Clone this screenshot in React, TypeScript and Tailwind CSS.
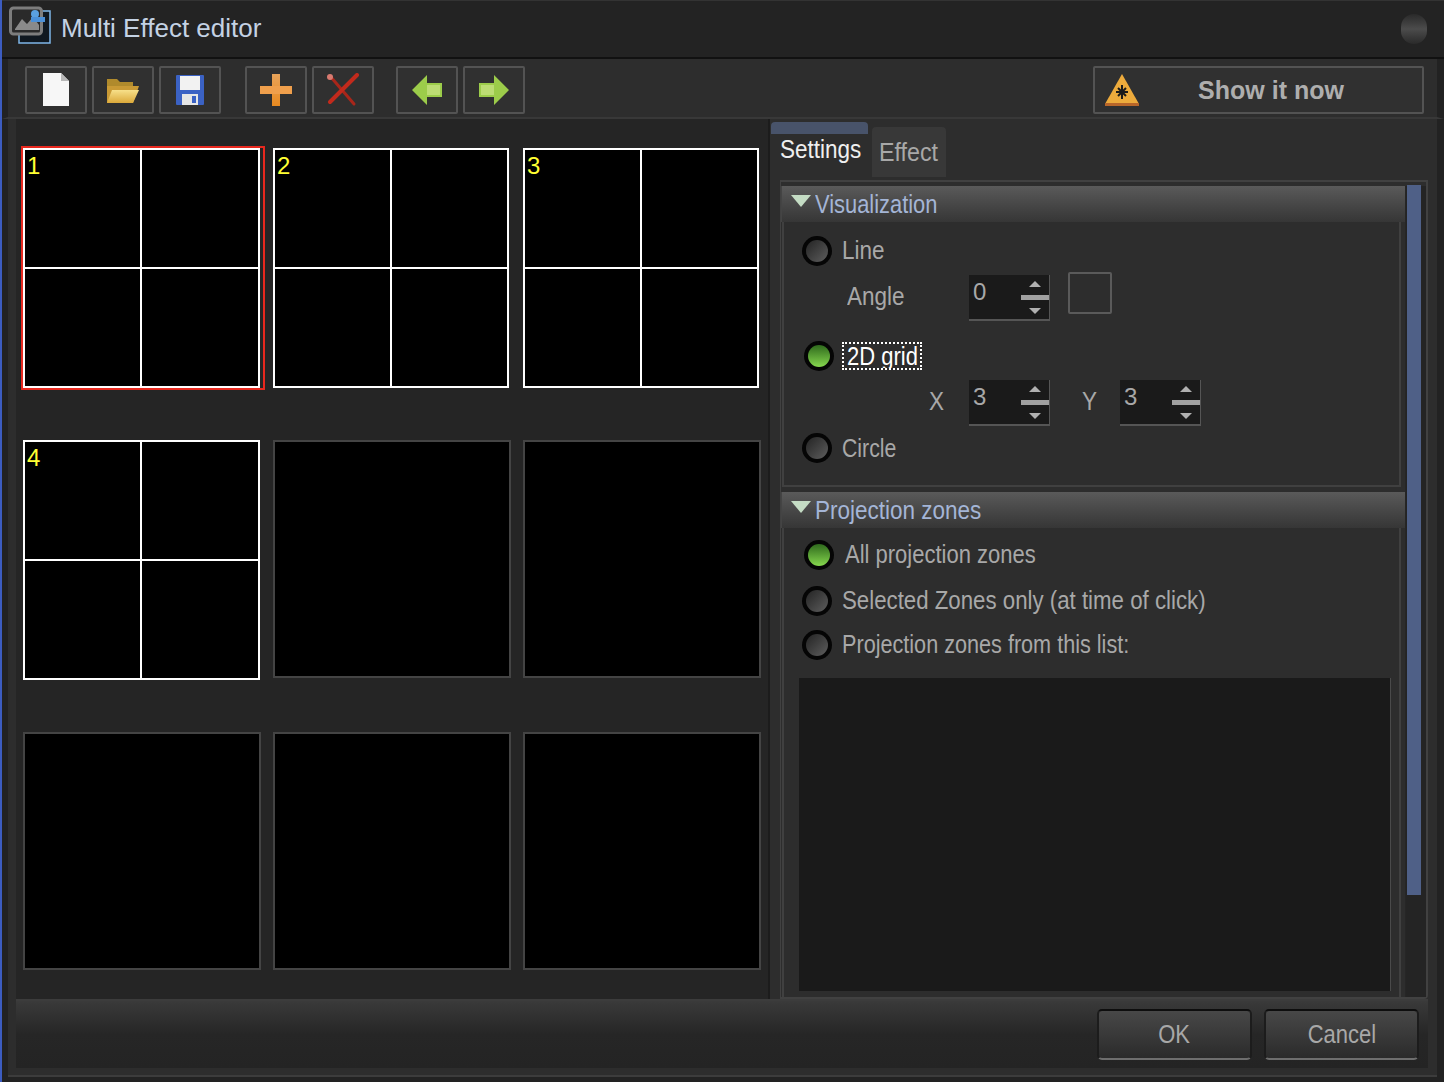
import React from "react";

const FONT = "font-['Liberation_Sans',Arial,sans-serif]";

function ToolBtn({ children, className = "" }: { children: React.ReactNode; className?: string }) {
  return (
    <div className={`w-[62px] h-[48px] flex items-center justify-center bg-[#303030] border-2 border-[#535353] rounded-[2px] ${className}`}>
      {children}
    </div>
  );
}

function Radio({ on = false, className = "" }: { on?: boolean; className?: string }) {
  return (
    <div className={`w-[30px] h-[30px] shrink-0 rounded-full bg-[#050505] p-[4px] ${className}`}>
      <div className={`w-full h-full rounded-full ${on ? "bg-gradient-to-b from-[#2f6a1d] to-[#86d84e]" : "bg-gradient-to-br from-[#242424] to-[#5e5e5e]"}`} />
    </div>
  );
}

function Spin({ value }: { value: string }) {
  return (
    <div className="w-[81px] h-[46px] bg-[#1a1a1a] border-r border-b-2 border-[#555] flex justify-between shrink-0">
      <span className="pl-[4px] text-[24px] leading-[34px] text-[#a8a8a8]">{value}</span>
      <div className="w-[28px] flex flex-col items-center pt-[6px]">
        <div className="w-0 h-0 border-x-[6px] border-x-transparent border-b-[6px] border-b-[#b0b0b0]" />
        <div className="w-[28px] h-[5px] mt-[8px] bg-[#a0a0a0]" />
        <div className="w-0 h-0 mt-[8px] border-x-[6px] border-x-transparent border-t-[6px] border-t-[#b0b0b0]" />
      </div>
    </div>
  );
}

function SectionHeader({ title, scale }: { title: string; scale: string }) {
  return (
    <div className="h-[36px] flex bg-gradient-to-b from-[#5a5a5a] to-[#363636] pl-[9px] border-l border-[#444]">
      <div className="w-0 h-0 mt-[9px] border-x-[10px] border-x-transparent border-t-[12px] border-t-[#c4dcc4]" />
      <span className={`ml-[4px] text-[25px] leading-[36px] text-[#a4b5d6] origin-left ${scale}`}>{title}</span>
    </div>
  );
}

function Cell({ n }: { n?: number }) {
  if (!n) return <div className="h-[238px] bg-black border-2 border-[#444]" />;
  return (
    <div className={`relative h-[240px] ${n === 1 || n === 4 ? "w-[237px]" : "w-[236px]"}`}>
      <div className="w-full h-full bg-white border-2 border-white grid grid-cols-[115px_1fr] grid-rows-2 gap-[2px]">
        <div className="bg-black" />
        <div className="bg-black" />
        <div className="bg-black" />
        <div className="bg-black" />
      </div>
      {n === 1 && <div className="absolute -left-[2px] -top-[2px] w-[244px] h-[244px] border-2 border-[#e8281e]" />}
      <span className="absolute left-[4px] top-[4px] text-[24px] leading-[28px] text-[#ffff33]">{n}</span>
    </div>
  );
}

const label = "text-[25px] leading-[30px] text-[#a8a8a8] origin-left whitespace-nowrap";

export default function App() {
  return (
    <div className={`${FONT} w-[1444px] h-[1082px] flex bg-[#2d2d2d] overflow-hidden`}>
      <div className="w-[2px] bg-[#3c5cc0]" />
      <div className="flex-1 flex flex-col min-w-0">
        {/* title */}
        <div className="h-[59px] shrink-0 flex items-center bg-[#232323] border-t border-[#333] border-b-2 border-b-[#111] pl-[7px] pr-[17px]">
          <svg width="44" height="44" viewBox="0 0 44 44" className="shrink-0 -mt-[4px]">
            <rect x="10" y="6" width="31" height="32" fill="#101820" stroke="#7fb6e8" strokeWidth="1.5" />
            <rect x="1.5" y="3" width="31" height="26" rx="3" fill="#2a2a2a" stroke="#7d7d7d" strokeWidth="3" />
            <path d="M6 24 L13 14 L18 19 L24 12 L30 20 L30 25 L6 25 Z" fill="#8a8a8a" />
            <circle cx="26" cy="9" r="4" fill="#5aa0e0" />
            <rect x="22" y="12" width="14" height="5" fill="#4b90d8" />
          </svg>
          <span className="ml-[8px] -mt-[2px] text-[26px] leading-[30px] text-[#c4d2e4] whitespace-nowrap">Multi Effect editor</span>
          <div className="ml-auto w-[26px] h-[30px] rounded-full bg-gradient-to-b from-[#2a2a2a] via-[#4c4c4c] to-[#2a2a2a]" />
        </div>
        {/* toolbar */}
        <div className="h-[60px] shrink-0 flex items-center bg-[#2d2d2d] border-l-[6px] border-r-[7px] border-x-[#222] border-b-2 border-b-[#383838] pl-[17px] pr-[13px]">
          <div className="flex gap-[5px] mt-[4px]">
            <ToolBtn>
              <svg width="30" height="36" viewBox="0 0 30 36">
                <path d="M2 1 H20 L28 9 V34 H2 Z" fill="#f7f7f7" />
                <path d="M20 1 V9 H28 Z" fill="#b8b8b8" />
              </svg>
            </ToolBtn>
            <ToolBtn>
              <svg width="34" height="28" viewBox="0 0 34 28">
                <defs>
                  <linearGradient id="fo" x1="0" y1="0" x2="0" y2="1">
                    <stop offset="0" stopColor="#f7e08a" />
                    <stop offset="1" stopColor="#dba93a" />
                  </linearGradient>
                </defs>
                <path d="M1 3 H11 L14 6 H27 V12 H1 Z" fill="#b08a2c" />
                <path d="M1 27 V10 H33 L27 27 Z" fill="#c99a35" />
                <path d="M1 27 L6 14 H33 L27 27 Z" fill="url(#fo)" />
              </svg>
            </ToolBtn>
            <ToolBtn>
              <svg width="30" height="32" viewBox="0 0 30 32">
                <rect x="1" y="1" width="28" height="30" rx="1" fill="#3b62c4" />
                <rect x="5" y="2" width="20" height="14" fill="#f2f2f2" />
                <rect x="7" y="20" width="16" height="11" fill="#e6e6e6" />
                <rect x="17" y="22" width="4" height="7" fill="#3b62c4" />
              </svg>
            </ToolBtn>
          </div>
          <div className="flex gap-[5px] ml-[24px] mt-[4px]">
            <ToolBtn>
              <svg width="34" height="34" viewBox="0 0 34 34">
                <defs>
                  <linearGradient id="pl" x1="0" y1="0" x2="0" y2="1">
                    <stop offset="0" stopColor="#e8a35a" />
                    <stop offset="1" stopColor="#e88a20" />
                  </linearGradient>
                </defs>
                <rect x="13" y="1" width="8" height="32" fill="url(#pl)" />
                <rect x="1" y="13" width="32" height="8" fill="#ef9f4c" />
              </svg>
            </ToolBtn>
            <ToolBtn>
              <svg width="34" height="34" viewBox="0 0 34 34">
                <path d="M4 3 L28 31" stroke="#a8261a" strokeWidth="3" strokeLinecap="round" />
                <path d="M31 2 L4 29" stroke="#c22a1c" strokeWidth="4" strokeLinecap="round" />
                <circle cx="4" cy="4" r="3" fill="#d87a70" />
              </svg>
            </ToolBtn>
          </div>
          <div className="flex gap-[5px] ml-[22px] mt-[4px]">
            <ToolBtn>
              <svg width="32" height="32" viewBox="0 0 32 32">
                <path d="M1 16 L16 1 V9 H31 V23 H16 V31 Z" fill="#9ccc4a" />
                <path d="M16 11 H29 V21 H16 Z" fill="#bcdc74" />
              </svg>
            </ToolBtn>
            <ToolBtn>
              <svg width="32" height="32" viewBox="0 0 32 32">
                <path d="M31 16 L16 1 V9 H1 V23 H16 V31 Z" fill="#9ccc4a" />
                <path d="M16 11 H3 V21 H16 Z" fill="#bcdc74" />
              </svg>
            </ToolBtn>
          </div>
          <div className="ml-auto w-[331px] h-[48px] mt-[4px] flex items-center bg-[#303030] border-2 border-[#535353] rounded-[2px] pl-[9px]">
            <svg width="36" height="34" viewBox="0 0 36 34" className="shrink-0">
              <path d="M18 1 L35 31 H1 Z" fill="#edab3c" />
              <rect x="1" y="30" width="34" height="3" fill="#b8662a" />
              <path d="M18 12 V26 M12 19 H24 M14 15 L22 23 M22 15 L14 23" stroke="#1a1a1a" strokeWidth="2" />
            </svg>
            <span className="flex-1 text-center pr-[20px] text-[25px] font-bold leading-[30px] text-[#aeaeae]">Show it now</span>
          </div>
        </div>
        {/* middle */}
        <div className="flex-1 min-h-0 flex border-l-[6px] border-r-[7px] border-[#222]">
          <div className="w-[8px] shrink-0 bg-[#2d2d2d]" />
          <div className="w-[752px] shrink-0 bg-[#252525] pl-[7px] pt-[29px]">
            <div className="grid grid-cols-[238px_238px_238px] gap-x-[12px] gap-y-[52px]">
              <Cell n={1} />
              <Cell n={2} />
              <Cell n={3} />
              <Cell n={4} />
              <Cell />
              <Cell />
              <Cell />
              <Cell />
              <Cell />
            </div>
          </div>
          <div className="w-[2px] shrink-0 bg-[#1c1c1c]" />
          <div className="flex-1 min-w-0 flex flex-col pr-[9px] pt-[3px]">
            {/* tabs */}
            <div className="h-[58px] shrink-0 flex items-start pl-[1px]">
              <div className="w-[97px] h-[60px] rounded-t-[4px] border-t-[12px] border-[#48536a] bg-[#2d2d2d] pl-[9px]">
                <span className="block text-[25px] leading-[30px] text-[#efefef] scale-x-[0.9] origin-left">Settings</span>
              </div>
              <div className="w-[74px] h-[50px] mt-[5px] ml-[4px] rounded-t-[4px] bg-[#383838] pl-[7px] pt-[9px]">
                <span className="block text-[25px] leading-[32px] text-[#a8a8a8] scale-x-[0.93] origin-left">Effect</span>
              </div>
            </div>
            {/* content */}
            <div className="flex-1 min-h-0 ml-[10px] flex border-t-2 border-r-2 border-b-2 border-l border-[#414141] pt-[4px] rounded-br-[4px]">
              <div className="w-[624px] shrink-0 flex flex-col">
                <SectionHeader title="Visualization" scale="scale-x-[0.875]" />
                <div className="h-[265px] shrink-0 ml-[1px] mr-[4px] border-x-2 border-b-2 border-[#404040] pl-[18px] pt-[14px]">
                  <div className="flex items-center gap-[10px] h-[30px]">
                    <Radio />
                    <span className={`${label} scale-x-[0.9] -mt-[2px]`}>Line</span>
                  </div>
                  <div className="flex items-start ml-[45px] mt-[9px]">
                    <span className={`${label} scale-x-[0.9] w-[122px] mt-[6px]`}>Angle</span>
                    <Spin value="0" />
                    <div className="w-[44px] h-[42px] ml-[18px] -mt-[3px] border-2 border-[#5a5a5a] rounded-[2px]" />
                  </div>
                  <div className="flex items-center ml-[2px] mt-[20px] h-[30px]">
                    <Radio on />
                    <span className="ml-[8px] px-[3px] h-[28px] border-2 border-dotted border-white text-[25px] leading-[24px] text-white whitespace-nowrap w-[80px] overflow-hidden"><span className="inline-block scale-x-[0.88] origin-left">2D grid</span></span>
                  </div>
                  <div className="flex items-start ml-[127px] mt-[9px]">
                    <span className={`${label} scale-x-[0.9] w-[40px] mt-[6px]`}>X</span>
                    <Spin value="3" />
                    <span className={`${label} scale-x-[0.9] ml-[32px] w-[38px] mt-[6px]`}>Y</span>
                    <Spin value="3" />
                  </div>
                  <div className="flex items-center gap-[10px] h-[30px] mt-[7px]">
                    <Radio />
                    <span className={`${label} scale-x-[0.85]`}>Circle</span>
                  </div>
                </div>
                <div className="h-[5px] shrink-0" />
                <SectionHeader title="Projection zones" scale="scale-x-[0.9]" />
                <div className="flex-1 min-h-0 ml-[1px] mr-[4px] border-x-2 border-[#404040] pl-[18px] pt-[12px]">
                  <div className="flex items-center ml-[2px] h-[30px]">
                    <Radio on />
                    <span className={`${label} scale-x-[0.88] ml-[11px] -mt-[2px]`}>All projection zones</span>
                  </div>
                  <div className="flex items-center gap-[10px] h-[30px] mt-[16px]">
                    <Radio />
                    <span className={`${label} scale-x-[0.89] -mt-[2px]`}>Selected Zones only (at time of click)</span>
                  </div>
                  <div className="flex items-center gap-[10px] h-[30px] mt-[14px]">
                    <Radio />
                    <span className={`${label} scale-x-[0.865] -mt-[2px]`}>Projection zones from this list:</span>
                  </div>
                  <div className="h-[313px] w-[592px] -ml-[3px] mt-[18px] bg-[#1a1a1a] border-r border-[#4a4a4a]" />
                </div>
              </div>
              <div className="flex-1 border-l border-[#262626] bg-[#242424] px-[1px]">
                <div className="w-[14px] h-[710px] -mt-[1px] bg-[#4f6087]" />
              </div>
            </div>
          </div>
        </div>
        {/* bottom bar */}
        <div className="h-[83px] shrink-0 flex flex-col border-l-[6px] border-r-[7px] border-[#222]">
          <div className="h-[69px] shrink-0 ml-[8px] mr-[9px] flex items-center justify-end gap-[12px] pr-[9px] border-t-2 border-[#3c3c3c] bg-gradient-to-b from-[#3a3a3a] via-[#262626] to-[#242424]">
            <div className="w-[155px] h-[51px] flex items-center justify-center rounded-[5px] border-t-2 border-t-[#0e0e0e] border-b-2 border-b-[#6e6e6e] border-x-2 border-x-[#1c1c1c] bg-gradient-to-b from-[#484848] to-[#2b2b2b] text-[25px] text-[#a8a8a8]"><span className="scale-x-[0.88]">OK</span></div>
            <div className="w-[155px] h-[51px] flex items-center justify-center rounded-[5px] border-t-2 border-t-[#0e0e0e] border-b-2 border-b-[#6e6e6e] border-x-2 border-x-[#1c1c1c] bg-gradient-to-b from-[#484848] to-[#2b2b2b] text-[25px] text-[#a8a8a8]"><span className="scale-x-[0.88]">Cancel</span></div>
          </div>
          <div className="h-[9px] shrink-0 bg-[#2d2d2d] border-b-2 border-[#3c3c3c]" />
          <div className="flex-1 bg-[#222]" />
        </div>
      </div>
    </div>
  );
}
